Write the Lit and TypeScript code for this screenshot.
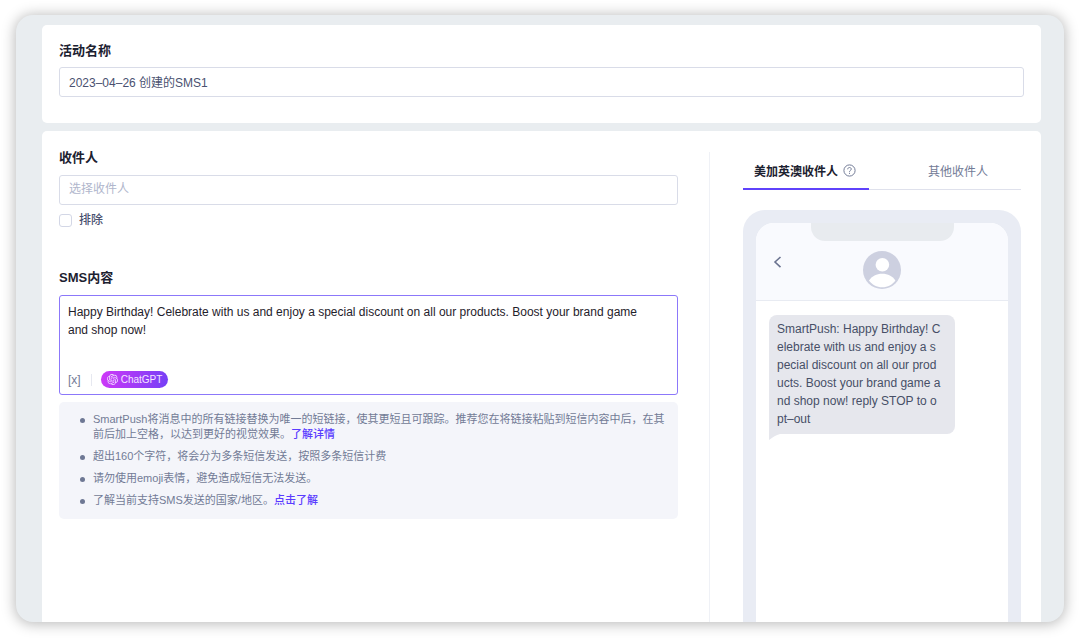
import { LitElement, html, css, svg } from "lit";
import { customElement, property, state } from "lit/decorators.js";
import { classMap } from "lit/directives/class-map.js";

const gptMark = svg`<path fill="currentColor" d="M22.2819 9.8211a5.9847 5.9847 0 0 0-.5157-4.9108 6.0462 6.0462 0 0 0-6.5098-2.9A6.0651 6.0651 0 0 0 4.9807 4.1818a5.9847 5.9847 0 0 0-3.9977 2.9 6.0462 6.0462 0 0 0 .7427 7.0966 5.98 5.98 0 0 0 .511 4.9107 6.051 6.051 0 0 0 6.5146 2.9001A5.9847 5.9847 0 0 0 13.2599 24a6.0557 6.0557 0 0 0 5.7718-4.2058 5.9894 5.9894 0 0 0 3.9977-2.9001 6.0557 6.0557 0 0 0-.7475-7.0729zm-9.022 12.6081a4.4755 4.4755 0 0 1-2.8764-1.0408l.1419-.0804 4.7783-2.7582a.7948.7948 0 0 0 .3927-.6813v-6.7369l2.02 1.1686a.071.071 0 0 1 .038.052v5.5826a4.504 4.504 0 0 1-4.4945 4.4944zm-9.6607-4.1254a4.4708 4.4708 0 0 1-.5346-3.0137l.142.0852 4.783 2.7582a.7712.7712 0 0 0 .7806 0l5.8428-3.3685v2.3324a.0804.0804 0 0 1-.0332.0615L9.74 19.9502a4.4992 4.4992 0 0 1-6.1408-1.6464zM2.3408 7.8956a4.485 4.485 0 0 1 2.3655-1.9728V11.6a.7664.7664 0 0 0 .3879.6765l5.8144 3.3543-2.0201 1.1685a.0757.0757 0 0 1-.071 0l-4.8303-2.7865A4.504 4.504 0 0 1 2.3408 7.872zm16.5963 3.8558L13.1038 8.364 15.1192 7.2a.0757.0757 0 0 1 .071 0l4.8303 2.7913a4.4944 4.4944 0 0 1-.6765 8.1042v-5.6772a.79.79 0 0 0-.407-.667zm2.0107-3.0231l-.142-.0852-4.7735-2.7818a.7759.7759 0 0 0-.7854 0L9.409 9.2297V6.8974a.0662.0662 0 0 1 .0284-.0615l4.8303-2.7866a4.4992 4.4992 0 0 1 6.6802 4.66zM8.3065 12.863l-2.02-1.1638a.0804.0804 0 0 1-.038-.0567V6.0742a4.4992 4.4992 0 0 1 7.3757-3.4537l-.142.0805L8.704 5.459a.7948.7948 0 0 0-.3927.6813zm1.0976-2.3654l2.602-1.4998 2.6069 1.4998v2.9994l-2.5974 1.4997-2.6067-1.4997Z"/>`;

@customElement("phone-preview")
class PhonePreview extends LitElement {
  @property() message = "";

  static styles = css`
    :host {
      display: flex;
      flex: 1;
      flex-direction: column;
      box-sizing: border-box;
      padding: 13px 13px 0;
      background: #e9ecf4;
      border-radius: 22px 22px 0 0;
    }
    .screen {
      flex: 1;
      background: #fff;
      border-radius: 18px 18px 0 0;
      overflow: hidden;
    }
    .head {
      display: flex;
      flex-direction: column;
      align-items: center;
      background: #f9fafe;
      border-bottom: 1px solid #e8ebf2;
      padding-bottom: 11px;
    }
    .notch {
      width: 143px;
      height: 18px;
      border-radius: 0 0 14px 14px;
      background: #e8ebef;
    }
    .row {
      display: grid;
      grid-template-columns: 1fr auto 1fr;
      align-self: stretch;
      margin-top: 10px;
      padding: 0 16px;
    }
    .back {
      justify-self: start;
      width: 12px;
      height: 22px;
      padding: 0;
      border: 0;
      background: none;
      color: #6b7390;
    }
    .back svg, .avatar {
      display: block;
    }
    .bubble {
      position: relative;
      width: fit-content;
      max-width: 186px;
      box-sizing: border-box;
      margin: 14px 13px;
      padding: 5px 13px 6px 8px;
      border-radius: 8px 8px 8px 0;
      background: #e6e7ed;
      color: #474f67;
      font-size: 12px;
      line-height: 18px;
      word-break: break-all;
    }
    .tail {
      position: absolute;
      left: 0;
      top: 100%;
      display: block;
    }
  `;

  render() {
    return html`
      <div class="screen">
        <div class="head">
          <div class="notch"></div>
          <div class="row">
            <button class="back" aria-label="返回">
              <svg width="12" height="22" viewBox="0 0 12 22" fill="none" stroke="currentColor" stroke-width="1.6"><path d="M8.500 6 3 11l5.500 5.200" /></svg>
            </button>
            <svg class="avatar" width="38" height="38" viewBox="0 0 38 38">
              <circle cx="19" cy="19" r="19" fill="#cdd0e0" />
              <circle cx="19.4" cy="13.7" r="6.8" fill="#fff" />
              <path d="M6 29.5C9 25 13.500 22.700 19.200 22.700S29.500 25 32.400 29.500C29.500 33.800 24.800 36.300 19.200 36.300S9 33.800 6 29.500Z" fill="#fff" />
            </svg>
          </div>
        </div>
        <div class="bubble">
          ${this.message}
          <svg class="tail" width="11" height="6" viewBox="0 0 11 6"><path d="M0 0h11C7 1.300 4 3 0 6Z" fill="#e6e7ed" /></svg>
        </div>
      </div>
    `;
  }
}

@customElement("app-root")
class AppRoot extends LitElement {
  @state() private content =
    "Happy Birthday! Celebrate with us and enjoy a special discount on all our products. Boost your brand game and shop now!";
  @state() private tab = 0;

  static styles = css`
    :host {
      display: flex;
      box-sizing: border-box;
      min-height: 100vh;
      padding: 15px 16px 16px;
      background: #fff;
      color: #4a5170;
      font-family: "Liberation Sans", "Noto Sans CJK SC", sans-serif;
      font-size: 12px;
    }
    input, textarea, button {
      font: inherit;
      color: inherit;
    }
    .frame {
      flex: 1;
      display: flex;
      flex-direction: column;
      gap: 8px;
      padding: 10px 23px 0 26px;
      border-radius: 17px;
      background: #e9edf0;
      box-shadow: 0 1px 14px 1px rgba(0, 0, 0, 0.28);
      overflow: hidden;
    }
    .card {
      background: #fff;
      border-radius: 5px;
      padding: 16px 17px 26px;
    }
    .main {
      flex: 1;
      display: flex;
      padding: 0 20px 0 17px;
      border-radius: 5px 5px 0 0;
    }
    .form {
      flex: 1;
      min-width: 0;
      padding: 17px 31px 16px 0;
    }
    .title {
      display: block;
      margin: 0 0 6px;
      color: #1c2130;
      font-size: 13px;
      font-weight: 600;
      line-height: 20px;
    }
    .main .title {
      margin-bottom: 7px;
    }
    .field {
      display: block;
      box-sizing: border-box;
      width: 100%;
      height: 30px;
      padding: 0 9px 2px;
      border: 1px solid #d9dce8;
      border-radius: 3px;
      background: #fff;
      outline: none;
    }
    .field::placeholder {
      color: #b0b6cc;
      opacity: 1;
    }
    .check {
      display: flex;
      align-items: center;
      gap: 7px;
      width: fit-content;
      margin: 5px 0 38px;
      line-height: 20px;
      font-weight: 500;
    }
    .check input {
      appearance: none;
      width: 13px;
      height: 13px;
      margin: 0;
      border: 1px solid #d3d7e6;
      border-radius: 3px;
      background: #fff;
    }
    .check input:checked {
      background: #5a3cff;
    }
    .editor {
      padding: 7px 8px 6px;
      border: 1px solid #8c78fa;
      border-radius: 3px;
    }
    .text {
      display: block;
      box-sizing: border-box;
      width: 100%;
      height: 68px;
      padding: 0 20px 0 0;
      border: 0;
      outline: none;
      resize: none;
      background: none;
      color: #1f222b;
      line-height: 18px;
      overflow: hidden;
    }
    .tools {
      display: flex;
      align-items: center;
      height: 17px;
    }
    .var {
      padding: 0 10px 0 0;
      border: 0;
      background: none;
      color: #727b96;
      line-height: 16px;
    }
    .sep {
      width: 1px;
      height: 12px;
      margin-right: 9px;
      background: #e6e8f0;
    }
    .gpt {
      display: flex;
      align-items: center;
      gap: 3px;
      height: 17px;
      padding: 0 6px;
      border: 0;
      border-radius: 9px;
      background: linear-gradient(100deg, #cf38f8, #7440f6);
      color: #f3e6ff;
      font-size: 10px;
      line-height: 17px;
    }
    .hints {
      margin: 7px 0 0;
      padding: 10px 3px 11px 34px;
      border-radius: 5px;
      background: #f4f5fa;
      color: #727b96;
      font-size: 11px;
      line-height: 15px;
      list-style: none;
    }
    .hints li {
      position: relative;
    }
    .hints li::before {
      content: "";
      position: absolute;
      left: -13px;
      top: 6px;
      width: 5px;
      height: 5px;
      border-radius: 50%;
      background: #6e7894;
    }
    .hints li + li {
      margin-top: 7px;
    }
    .hints a {
      color: #5a3cff;
      font-weight: 500;
      text-decoration: none;
    }
    .side {
      display: flex;
      flex-direction: column;
      flex: 0 0 278px;
      margin-top: 21px;
      padding-left: 33px;
      border-left: 1px solid #eff1f6;
    }
    .tabs {
      display: flex;
      margin-bottom: 20px;
      box-shadow: inset 0 -1px #dfe1ec;
    }
    .tab {
      display: flex;
      flex: 1;
      align-items: center;
      justify-content: center;
      gap: 5px;
      height: 38px;
      padding: 0;
      border: 0;
      border-bottom: 2px solid transparent;
      background: none;
      color: #727b96;
      white-space: nowrap;
    }
    .tab:first-child {
      flex: 0 0 126px;
      padding-right: 2px;
      box-sizing: border-box;
    }
    .tab:last-child {
      padding-left: 26px;
    }
    .tab.on {
      border-bottom-color: #5f42fb;
      color: #1c2130;
      font-weight: 600;
    }
    .help {
      color: #727b96;
    }
  `;

  private onInput(e: Event) {
    this.content = (e.target as HTMLTextAreaElement).value;
  }

  render() {
    return html`
      <main class="frame">
        <section class="card">
          <label class="title" for="name">活动名称</label>
          <input class="field" id="name" type="text" value="2023–04–26 创建的SMS1" />
        </section>
        <section class="card main">
          <div class="form">
            <label class="title" for="to">收件人</label>
            <input class="field" id="to" type="text" placeholder="选择收件人" />
            <label class="check"><input type="checkbox" />排除</label>
            <label class="title" for="sms">SMS内容</label>
            <div class="editor">
              <textarea class="text" id="sms" .value=${this.content} @input=${this.onInput}></textarea>
              <div class="tools">
                <button class="var">[x]</button>
                <span class="sep"></span>
                <button class="gpt">
                  <svg width="11" height="11" viewBox="0 0 24 24">${gptMark}</svg>ChatGPT
                </button>
              </div>
            </div>
            <ul class="hints">
              <li>SmartPush将消息中的所有链接替换为唯一的短链接，使其更短且可跟踪。推荐您在将链接粘贴到短信内容中后，在其前后加上空格，以达到更好的视觉效果。<a href="#links">了解详情</a></li>
              <li>超出160个字符，将会分为多条短信发送，按照多条短信计费</li>
              <li>请勿使用emoji表情，避免造成短信无法发送。</li>
              <li>了解当前支持SMS发送的国家/地区。<a href="#regions">点击了解</a></li>
            </ul>
          </div>
          <aside class="side">
            <div class="tabs" role="tablist">
              <button class=${classMap({ tab: true, on: this.tab === 0 })} role="tab" aria-selected=${this.tab === 0} @click=${() => (this.tab = 0)}>
                美加英澳收件人
                <svg class="help" width="13" height="13" viewBox="0 0 13 13" fill="none" stroke="currentColor">
                  <circle cx="6.5" cy="6.5" r="5.600" />
                  <path d="M4.700 5.300c0-1.100.8-1.800 1.800-1.800s1.800.7 1.800 1.600c0 1.300-1.800 1.300-1.800 2.700M6.500 8.800v1.100" />
                </svg>
              </button>
              <button class=${classMap({ tab: true, on: this.tab === 1 })} role="tab" aria-selected=${this.tab === 1} @click=${() => (this.tab = 1)}>其他收件人</button>
            </div>
            <phone-preview .message=${"SmartPush: " + this.content + " reply STOP to opt–out"}></phone-preview>
          </aside>
        </section>
      </main>
    `;
  }
}
